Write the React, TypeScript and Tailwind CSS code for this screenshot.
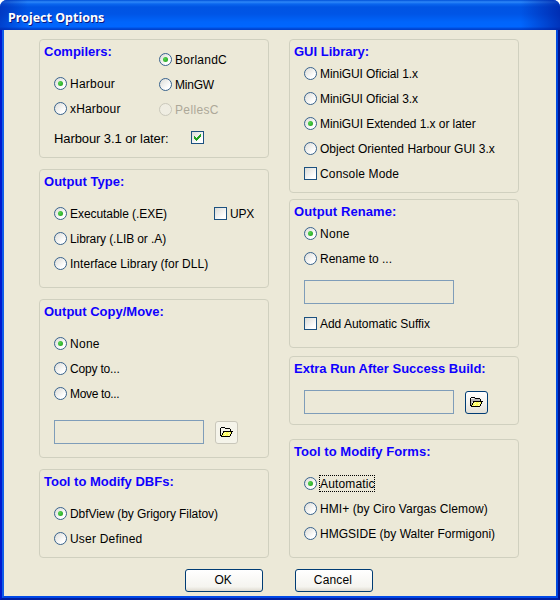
import type { ReactNode } from 'react';
import clsx from 'clsx';

function RadioMark({ checked, disabled }: { checked?: boolean; disabled?: boolean }) {
  return (
    <span
      className={clsx(
        'flex size-[13px] shrink-0 items-center justify-center rounded-full border-[1.5px]',
        disabled
          ? 'border-[#cac8bb] bg-[#efede2]'
          : 'border-[#38628d] bg-linear-135 from-[#dcdcd7] to-white to-75%',
      )}
    >
      {checked && (
        <span className="size-[5px] shrink-0 rounded-full bg-radial-[at_35%_35%] from-[#55d551] to-[#1a9b17]" />
      )}
    </span>
  );
}

function CheckMark({ checked }: { checked?: boolean }) {
  return (
    <span className="flex size-[13px] shrink-0 items-center justify-center border border-[#1c5180] bg-linear-135 from-[#dcdcd7] to-white to-80%">
      {checked && (
        <svg width="7" height="7" viewBox="0 0 7 7" shapeRendering="crispEdges">
          <path
            d="M0 2h1v3h-1zM1 3h1v3h-1zM2 4h1v3h-1zM3 3h1v3h-1zM4 2h1v3h-1zM5 1h1v3h-1zM6 0h1v3h-1z"
            fill="#21a121"
          />
        </svg>
      )}
    </span>
  );
}

type OptionProps = {
  children: string;
  kind?: 'radio' | 'check';
  checked?: boolean;
  disabled?: boolean;
  focused?: boolean;
  spacing?: string;
};

function Option({ children, kind = 'radio', checked, disabled, focused, spacing }: OptionProps) {
  return (
    <label className="flex h-[25px] items-start pt-1.5">
      {kind === 'radio' ? (
        <RadioMark checked={checked} disabled={disabled} />
      ) : (
        <CheckMark checked={checked} />
      )}
      <span
        className={clsx(
          'ml-[3px] text-xs leading-[14px] whitespace-nowrap',
          spacing,
          disabled && 'text-[#aca899]',
          focused && '-mt-0.5 ml-[2px]! h-[17px] w-14 border border-dotted border-black pt-px',
        )}
      >
        {children}
      </span>
    </label>
  );
}

function Title({ children, spacing }: { children: string; spacing?: string }) {
  return (
    <h2
      className={clsx(
        'pt-[3px] pl-1 text-[13px] leading-[17px] font-bold whitespace-nowrap text-[#0f00ff]',
        spacing,
      )}
    >
      {children}
    </h2>
  );
}

function Group({ className, children }: { className: string; children: ReactNode }) {
  return (
    <section className={clsx('w-[230px] rounded-[4px] border border-[#d0d0bf]', className)}>
      {children}
    </section>
  );
}

function TextBox() {
  return <div className="h-6 w-[150px] border border-[#7f9db9]" />;
}

function FolderIcon({ disabled }: { disabled?: boolean }) {
  return (
    <svg width="13" height="11" viewBox="0 0 13 11" shapeRendering="crispEdges">
      <path d="M1 2h3v-1h1v1h5v2h-7l-2 5z" fill={disabled ? '#f5f4ea' : '#b4b4b4'} />
      <path d="M4 5h8l-2 4h-8z" fill="#ffff5a" />
      <path
        d="M5 5h1v1h-1zM9 5h1v1h-1zM4 6h1v1h-1zM8 6h1v1h-1zM5 7h1v1h-1zM9 7h1v1h-1zM4 8h1v1h-1zM8 8h1v1h-1z"
        fill="#ffffc0"
      />
      <path
        d="M1 0h4v1h-4zM0 1h1v8h-1zM5 1h5v1h-5zM10 2h1v2h-1zM3 4h10v1h-10zM3 5h1v1h-1zM2 6h1v2h-1zM1 8h1v1h-1zM12 5h-1v2h1zM10 7h1v2h-1zM1 9h9v1h-9z"
        fill="#000"
      />
    </svg>
  );
}

function BrowseButton({ disabled }: { disabled?: boolean }) {
  return (
    <button
      className={clsx(
        'ml-[11px] mt-px flex size-[23px] items-center justify-center rounded-[3px] border',
        disabled
          ? 'border-[#c9c7ba] bg-[#f5f4ea]'
          : 'border-[#003c74] bg-linear-to-b from-white via-[#f4f3ee] to-[#e3e0d6]',
      )}
    >
      <FolderIcon disabled={disabled} />
    </button>
  );
}

function PushButton({ children, spacing }: { children: string; spacing: string }) {
  return (
    <button
      className={clsx(
        'h-[23px] w-[78px] rounded-[3px] border border-[#003c74] bg-linear-to-b from-white via-[#f5f4ef] via-80% to-[#dfdbd0] pr-0.5 text-xs leading-[21px]',
        spacing,
      )}
    >
      {children}
    </button>
  );
}

export default function App() {
  return (
    <div className="h-[600px] w-[560px] bg-white font-['Liberation_Sans',Arial,sans-serif] text-black">
      <div className="flex h-full flex-col overflow-hidden rounded-t-[7px] bg-[#0a3fd8]">
        <header className="flex h-[30px] shrink-0 bg-[linear-gradient(90deg,#0024a890,transparent_5%,transparent_93%,#001c9cb0),linear-gradient(180deg,#0050d8_0px,#2f88f8_2px,#0a66ee_4px,#0054e3_7px,#0055e6_14px,#0065fb_22px,#0066ff_27px,#0050e0_28px,#003dc8_30px)] pt-[9px] pl-[8px]">
          <h1 className="font-['Noto_Sans',sans-serif] text-[12.5px] leading-[18px] font-bold whitespace-nowrap text-white [text-shadow:1px_1px_0_#0a1883]">
            Project Options
          </h1>
        </header>
        <div className="flex grow border-x-2 border-b-2 border-l-[#0019cf] border-r-[#00138c] border-b-[#001ea0]">
          <main className="grow border-x-2 border-b-2 border-l-[#0f5ce8] border-r-[#0048e0] border-b-[#0048e8] bg-[#ece9d8] pt-[9px] pl-[35px]">
            <div className="flex gap-5">
              <div className="flex flex-col gap-[11px]">
                <Group className="h-[119px]">
                  <div className="flex h-[85px]">
                    <div className="w-[119px]">
                      <Title>Compilers:</Title>
                      <div className="pt-[11px] pl-3.5">
                        <Option checked spacing="tracking-[0.25px]">Harbour</Option>
                        <Option spacing="tracking-[0.15px]">xHarbour</Option>
                      </div>
                    </div>
                    <div className="pt-[7px]">
                      <Option checked spacing="tracking-[0.25px]">BorlandC</Option>
                      <Option spacing="tracking-[-0.2px]">MinGW</Option>
                      <Option disabled spacing="tracking-[0.35px]">PellesC</Option>
                    </div>
                  </div>
                  <label className="flex pt-1.5 pl-3.5">
                    <span className="w-[137px] text-[13px] leading-[15px] tracking-[-0.09px] whitespace-nowrap">
                      Harbour 3.1 or later:
                    </span>
                    <CheckMark checked />
                  </label>
                </Group>

                <Group className="h-[119px]">
                  <Title spacing="tracking-[0.03px]">Output Type:</Title>
                  <div className="flex pt-[11px] pl-3.5">
                    <div className="w-40">
                      <Option checked spacing="tracking-[-0.06px]">Executable (.EXE)</Option>
                      <Option spacing="tracking-[-0.1px]">Library (.LIB or .A)</Option>
                      <Option spacing="tracking-[0.03px]">Interface Library (for DLL)</Option>
                    </div>
                    <Option kind="check" spacing="tracking-[-0.2px]">UPX</Option>
                  </div>
                </Group>

                <Group className="h-[159px]">
                  <Title>Output Copy/Move:</Title>
                  <div className="pt-[11px] pl-3.5">
                    <Option checked spacing="tracking-[0.27px]">None</Option>
                    <Option spacing="tracking-[-0.18px]">Copy to...</Option>
                    <Option spacing="tracking-[-0.34px]">Move to...</Option>
                    <div className="flex pt-3.5">
                      <TextBox />
                      <BrowseButton disabled />
                    </div>
                  </div>
                </Group>

                <Group className="h-[89px]">
                  <Title>Tool to Modify DBFs:</Title>
                  <div className="pt-[11px] pl-3.5">
                    <Option checked spacing="tracking-[-0.07px]">DbfView (by Grigory Filatov)</Option>
                    <Option spacing="tracking-[0.2px]">User Defined</Option>
                  </div>
                </Group>
              </div>

              <div className="flex flex-col">
                <Group className="h-[154px]">
                  <Title>GUI Library:</Title>
                  <div className="pt-px pl-3.5">
                    <Option spacing="tracking-[-0.07px]">MiniGUI Oficial 1.x</Option>
                    <Option spacing="tracking-[-0.07px]">MiniGUI Oficial 3.x</Option>
                    <Option checked spacing="tracking-[-0.06px]">MiniGUI Extended 1.x or later</Option>
                    <Option>Object Oriented Harbour GUI 3.x</Option>
                    <Option kind="check" spacing="tracking-[0.15px]">Console Mode</Option>
                  </div>
                </Group>

                <Group className="mt-1.5 h-[149px]">
                  <Title spacing="tracking-[0.1px]">Output Rename:</Title>
                  <div className="pt-px pl-3.5">
                    <Option checked spacing="tracking-[0.27px]">None</Option>
                    <Option>Rename to ...</Option>
                    <div className="pt-[9px] pb-[7px]">
                      <TextBox />
                    </div>
                    <Option kind="check" spacing="tracking-[-0.03px]">Add Automatic Suffix</Option>
                  </div>
                </Group>

                <Group className="mt-2 h-[69px]">
                  <Title>Extra Run After Success Build:</Title>
                  <div className="flex pt-[13px] pl-3.5">
                    <TextBox />
                    <BrowseButton />
                  </div>
                </Group>

                <Group className="mt-3.5 h-[119px]">
                  <Title spacing="tracking-[0.05px]">Tool to Modify Forms:</Title>
                  <div className="pt-[11px] pl-3.5">
                    <Option checked focused spacing="tracking-[0.15px]">Automatic</Option>
                    <Option spacing="tracking-[0.08px]">HMI+ (by Ciro Vargas Clemow)</Option>
                    <Option spacing="tracking-[0.03px]">HMGSIDE (by Walter Formigoni)</Option>
                  </div>
                </Group>
              </div>
            </div>

            <div className="flex gap-8 pt-[11px] pl-[146px]">
              <PushButton spacing="tracking-[-0.2px]">OK</PushButton>
              <PushButton spacing="tracking-[0.18px]">Cancel</PushButton>
            </div>
          </main>
        </div>
      </div>
    </div>
  );
}
